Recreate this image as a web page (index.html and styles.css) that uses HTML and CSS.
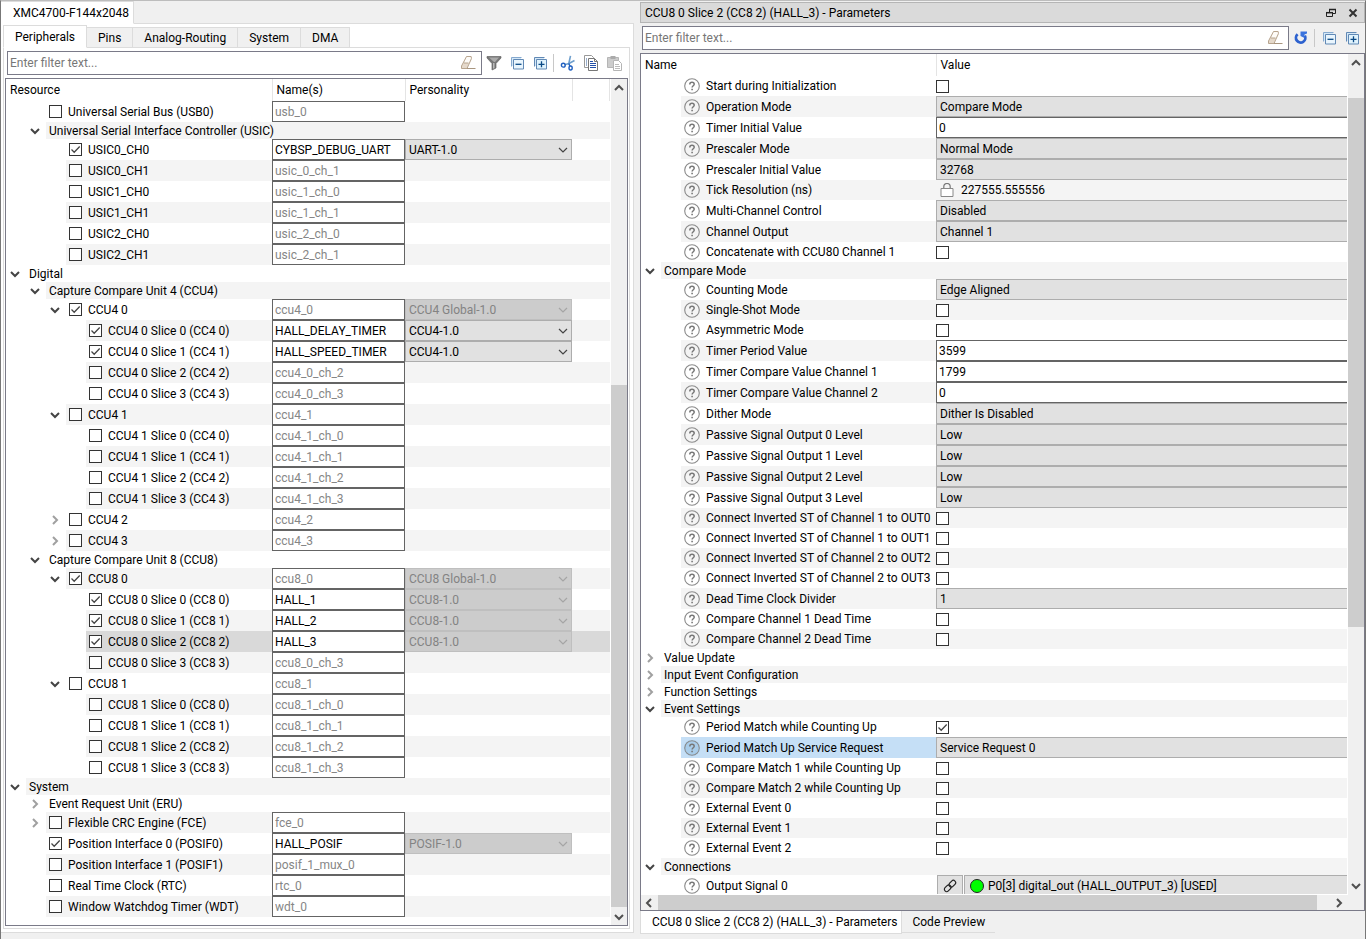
FILE: index.html
```
<!DOCTYPE html>
<html lang="en">
<head>
<meta charset="utf-8">
<title>Device Configurator</title>
<link rel="stylesheet" href="styles.css">
</head>
<body>
<svg class="sprite" aria-hidden="true">
  <symbol id="i-down" viewBox="0 0 10 10"><path d="M1 3l4 4 4-4" fill="none" stroke="#444" stroke-width="2"/></symbol>
  <symbol id="i-right" viewBox="0 0 10 10"><path d="M3 1l4 4-4 4" fill="none" stroke="#a0a0a0" stroke-width="2"/></symbol>
  <symbol id="i-arrow" viewBox="0 0 10 10"><path d="M1 7l4-4 4 4" fill="none" stroke="#505050" stroke-width="2"/></symbol>
  <symbol id="i-combo" viewBox="0 0 10 10"><path d="M1 3l4 4 4-4" fill="none" stroke="currentColor" stroke-width="1.2"/></symbol>
  <symbol id="i-help" viewBox="0 0 16 16"><circle cx="8" cy="8" r="7.3" fill="none" stroke="#8a8a8a" stroke-width="1.1"/><path d="M5.8 6.4c0-1.4 1-2.1 2.2-2.1s2.2.8 2.2 1.9c0 1.4-2.1 1.7-2.1 3.3" fill="none" stroke="#777" stroke-width="1.5"/><path d="M7.3 10.7h1.6v1.6H7.3z" fill="#777"/></symbol>
  <symbol id="i-eraser" viewBox="0 0 16 16"><path d="M6.5 1.5h5L7 13.5H1.5V11z" fill="#e5d9cb"/><path d="M6.5 1.5h5L9 8H4z" fill="#fdfbf8"/><path d="M1.5 13.5V11l5-9.500h4.600l.4 2-4.500 10zM4 8h4.500" fill="none" stroke="#b7a48e"/><path d="M7 13.500h8.500" stroke="#a8957f"/></symbol>
  <symbol id="i-funnel" viewBox="0 0 16 16"><path d="M1 1.500h14v1.500L10 8.500V13l-4 2V8.500L1 3z" fill="#777"/><path d="M3 2.500h10L9 7H8z" fill="#aaa"/><path d="M7 8h1.500v5L7 14z" fill="#bbb"/><path d="M1 1.500h14v1.500L10 8.500V13l-4 2V8.500L1 3z" fill="none" stroke="#666" stroke-width=".7"/></symbol>
  <symbol id="i-collapse" viewBox="0 0 16 16"><path d="M2.500 11.500v-9h10" fill="none" stroke="#85a9cf"/><path d="M3 3h9v8H3z" fill="#d5e8f7"/><path d="M4.500 4.500h10v9.500h-10z" fill="#e9f5fd" stroke="#6189b5"/><path d="M6.500 9.300h6" stroke="#0b4a86" stroke-width="1.300"/></symbol>
  <symbol id="i-expand" viewBox="0 0 16 16"><path d="M2.500 11.500v-9h10" fill="none" stroke="#6189b5"/><path d="M3 3h9v8H3z" fill="#d5e8f7"/><path d="M4.500 4.500h10v9.500h-10z" fill="#e0f3fd" stroke="#6189b5"/><path d="M6.500 9.300h6M9.500 6.300v6" stroke="#0b4a86" stroke-width="1.300"/></symbol>
  <symbol id="i-cut" viewBox="0 0 16 16"><path d="M10.500.8L8.800 8.500M14.500 5.500L9 8.500l-4.500 1.200" fill="none" stroke="#6f9fcd" stroke-width="1.600"/><circle cx="3.300" cy="10.200" r="1.900" fill="none" stroke="#1f5fc0" stroke-width="1.400"/><ellipse cx="10.600" cy="13" rx="1.600" ry="2" fill="none" stroke="#1f5fc0" stroke-width="1.400"/><path d="M8.700 8.500l1.300 2.800" stroke="#1f5fc0" stroke-width="1.500"/></symbol>
  <symbol id="i-copy" viewBox="0 0 16 16"><path d="M1.500.500h7l2 2v10h-9z" fill="#fff" stroke="#999"/><path d="M3 4h1M3 6h1M3 8h1M3 10h1" stroke="#35609c"/><path d="M5.500 3.500h6l3 3v9h-9z" fill="#fff" stroke="#777"/><path d="M11.500 3.500v3h3" fill="none" stroke="#777"/><path d="M7 8.500h6M7 10.500h6M7 12.500h6M7 6.500h3" stroke="#2450a8"/></symbol>
  <symbol id="i-paste" viewBox="0 0 16 16"><path d="M1.500 2.500h11v10h-11z" fill="#ccc" stroke="#b5b5b5"/><path d="M4.500 1h5v3h-5z" fill="#aaa"/><path d="M7.500 5.500h5l3 3v7h-8z" fill="#fff" stroke="#b5b5b5"/><path d="M9 9.500h4M9 11.500h5M9 13.500h5" stroke="#bbb"/></symbol>
  <symbol id="i-refresh" viewBox="0 0 16 16"><path d="M4.600 4.300A4.700 4.700 0 1 0 11.800 5.600" fill="none" stroke="#2d62cf" stroke-width="2.800"/><path d="M7.500 1.500h6.500v2l-2.500 1V8L7.500 6z" fill="#3a73dd"/></symbol>
  <symbol id="i-restore" viewBox="0 0 10 10"><path d="M3.500 4V1.500h6v4H7" fill="none" stroke="#222"/><path d="M3 1.500h7" stroke="#222" stroke-width="1.500"/><path d="M.500 4.500h6v4h-6z" fill="#dadada" stroke="#222"/><path d="M0 4.700h7" stroke="#222" stroke-width="1.500"/></symbol>
  <symbol id="i-close" viewBox="0 0 10 10"><path d="M1.500 1.500l7 7M8.500 1.500l-7 7" stroke="#333" stroke-width="2"/></symbol>
  <symbol id="i-lock" viewBox="0 0 14 14"><path d="M3.800 5.500V3.700a3.200 3.200 0 0 1 6.400 0v1.800" fill="none" stroke="#777" stroke-width="1.200"/><path d="M1 5.500h12v8H1z" fill="#fff" stroke="#888"/></symbol>
  <symbol id="i-link" viewBox="0 0 14 14"><g transform="rotate(-45 7 7)" fill="none" stroke="#222" stroke-width="1.200"><rect x="0" y="4.700" width="7.500" height="4.600" rx="2.300"/><rect x="6.500" y="4.700" width="7.500" height="4.600" rx="2.300"/></g></symbol>
</svg>

<main class="window">
  <section class="pane device">
    <nav class="tabs doc-tabs"><button class="tab active">XMC4700-F144x2048</button></nav>
    <div class="device-body">
      <nav class="tabs sub-tabs">
        <button class="tab active">Peripherals</button><button class="tab">Pins</button><button class="tab">Analog-Routing</button><button class="tab">System</button><button class="tab">DMA</button>
      </nav>
      <div class="device-page">
        <div class="toolbar">
          <div class="filter"><input type="text" placeholder="Enter filter text..." aria-label="Filter resources"><button class="tool" aria-label="Clear filter"><svg class="icon"><use href="#i-eraser"/></svg></button></div>
          <button class="tool" aria-label="Filter"><svg class="icon"><use href="#i-funnel"/></svg></button>
          <button class="tool" aria-label="Collapse all"><svg class="icon"><use href="#i-collapse"/></svg></button>
          <button class="tool" aria-label="Expand all"><svg class="icon"><use href="#i-expand"/></svg></button>
          <span class="divider"></span>
          <button class="tool" aria-label="Cut"><svg class="icon"><use href="#i-cut"/></svg></button>
          <button class="tool" aria-label="Copy"><svg class="icon"><use href="#i-copy"/></svg></button>
          <button class="tool" aria-label="Paste" disabled><svg class="icon"><use href="#i-paste"/></svg></button>
        </div>
        <div class="frame">
          <div class="viewport">
            <table class="grid">
              <colgroup><col class="c-resource"><col class="c-names"><col class="c-personality"><col></colgroup>
              <thead><tr><th>Resource</th><th>Name(s)</th><th>Personality</th><th></th></tr></thead>
              <tbody id="resources"></tbody>
            </table>
          </div>
          <div class="vbar"><svg class="arrow"><use href="#i-arrow"/></svg><div class="track low"><div class="thumb"></div></div><svg class="arrow flip"><use href="#i-arrow"/></svg></div>
        </div>
      </div>
    </div>
  </section>

  <section class="pane params">
    <header class="title"><h1>CCU8 0 Slice 2 (CC8 2) (HALL_3) - Parameters</h1>
      <button class="tool" aria-label="Restore"><svg class="small"><use href="#i-restore"/></svg></button>
      <button class="tool" aria-label="Close"><svg class="small"><use href="#i-close"/></svg></button>
    </header>
    <div class="toolbar">
      <div class="filter"><input type="text" placeholder="Enter filter text..." aria-label="Filter parameters"><button class="tool" aria-label="Clear filter"><svg class="icon"><use href="#i-eraser"/></svg></button></div>
      <button class="tool" aria-label="Reset"><svg class="icon"><use href="#i-refresh"/></svg></button>
      <span class="divider"></span>
      <button class="tool" aria-label="Collapse all"><svg class="icon"><use href="#i-collapse"/></svg></button>
      <button class="tool" aria-label="Expand all"><svg class="icon"><use href="#i-expand"/></svg></button>
    </div>
    <div class="frame">
      <div class="viewport">
        <table class="grid">
          <colgroup><col class="c-param"><col></colgroup>
          <thead><tr><th>Name</th><th>Value</th></tr></thead>
          <tbody id="parameters"></tbody>
        </table>
      </div>
      <div class="vbar"><svg class="arrow"><use href="#i-arrow"/></svg><div class="track high"><div class="thumb"></div></div><svg class="arrow flip"><use href="#i-arrow"/></svg></div>
      <div class="hbar"><svg class="arrow left"><use href="#i-arrow"/></svg><div class="track"><div class="thumb"></div></div><svg class="arrow right"><use href="#i-arrow"/></svg></div>
    </div>
    <nav class="tabs bottom-tabs"><button class="tab active">CCU8 0 Slice 2 (CC8 2) (HALL_3) - Parameters</button><button class="tab">Code Preview</button></nav>
  </section>
</main>
<script src="app.js"></script>
</body>
</html>
```
FILE: styles.css
```
* { box-sizing: border-box; }
body { margin: 0; background: #f0f0f0; color: #000; font: 12px/16px Roboto, "Open Sans", sans-serif; }
button, input, select { font: inherit; color: inherit; margin: 0; padding: 0; border: 0; border-radius: 0; background: none; }
svg { display: block; flex: none; }
.sprite { display: none; }
.icon { width: 16px; height: 16px; }
.small, .arrow { width: 10px; height: 10px; }

.window { display: flex; gap: 6px; height: 100vh; min-height: 400px; border: 1px solid #bdbdbd; border-left-color: #777; border-right-color: #777; border-bottom: 0; }
.pane { display: flex; flex-direction: column; min-width: 0; }
.device { flex: 633 1 0; padding-bottom: 6px; }
.params { flex: 725 1 0; padding: 1px 0 5px; }

.tabs { display: flex; flex: none; }
.tab { padding: 0 11px; border: 1px solid #dcdcdc; border-left: 0; background: #f0f0f0; white-space: nowrap; }
.tab.active { background: #fff; border-bottom-color: #fff; }

.doc-tabs { height: 23px; }
.doc-tabs .tab { padding: 0 4px 0 12px; }
.doc-tabs::after, .sub-tabs::after { content: ""; flex: 1; border-bottom: 1px solid #dcdcdc; }
.device-body { display: flex; flex-direction: column; flex: 1; min-height: 0; padding: 1px 3px 3px 2px; background: #fff; border: 1px solid #dcdcdc; border-width: 0 1px 1px 0; }
.sub-tabs { height: 23px; align-items: flex-end; }
.sub-tabs .tab { height: 21px; }
.sub-tabs .tab.active { height: 23px; border-left: 1px solid #dcdcdc; }
.device-page { display: flex; flex-direction: column; flex: 1; min-height: 0; padding: 0 1px 2px; border: 1px solid #dcdcdc; border-top: 0; }

.toolbar { display: flex; flex: none; align-items: center; height: 30px; padding: 0 2px; }
.device .toolbar { padding-right: 3px; }
.filter { display: flex; flex: 1; align-items: center; height: 24px; border: 1px solid #7a7a88; background: #fff; }
.filter input { flex: 1; min-width: 0; padding: 0 2px; outline: 0; }
.filter input::placeholder { color: #777; opacity: 1; }
.filter .tool { width: 26px; }
.tool { display: flex; align-items: center; justify-content: center; width: 23px; height: 22px; }
.divider { width: 1px; height: 18px; margin: 0 2px; background: #c8c8c8; }

.frame { display: grid; flex: 1; grid-template: minmax(0, 1fr) auto / minmax(0, 1fr) 16px; min-height: 0; border: 1px solid #7a7a88; background: #f0f0f0; }
.viewport { overflow: hidden; background: #fff; border-right: 1px solid #fff; }
.grid { width: 100%; border-collapse: collapse; table-layout: fixed; }
.c-resource { width: 266px; }
.c-names { width: 133px; }
.c-personality { width: 167px; }
.c-param { width: 295px; }
th { height: 22px; padding: 0 4px; font-weight: 400; text-align: left; border-right: 1px solid #e4e4e4; }
.params th:last-child { border-right: 0; }
td { height: 21px; padding: 0; }
.group td { height: 17px; }
.check td { height: 20px; }

.name { display: flex; height: 100%; white-space: nowrap; }
.name.l1 { padding-left: 20px; }
.name.l2 { padding-left: 40px; }
.name.l3 { padding-left: 60px; }
.twisty { display: flex; align-items: center; width: 20px; padding-left: 4px; flex: none; }
.twisty svg { width: 10px; height: 10px; }
.fill { display: flex; flex: 1; align-items: center; gap: 6px; min-width: 0; height: 21px; padding-left: 3px; }
.group .fill { height: 17px; }
.check .fill { height: 20px; }
.odd .fill, .odd td.value { background: #f4f4f4; }
.selected .fill, .selected td.value { background: #d9d9d9; }
.current .fill { background: #c5dff6; }
.current .fill svg { background: #a9cdea; border-radius: 50%; }

input[type="checkbox"] { appearance: none; flex: none; display: block; width: 13px; height: 13px; border: 1px solid #333; background: #fff; }
input[type="checkbox"]:checked { background: #fff url("data:image/svg+xml,%3Csvg xmlns='http://www.w3.org/2000/svg' viewBox='0 0 11 11'%3E%3Cpath d='M1.500 5.500l2.700 2.700 5.500-5.700' fill='none' stroke='%23444' stroke-width='1.300'/%3E%3C/svg%3E"); }

.edit { display: block; width: 100%; height: 21px; padding: 0 2px; border: 1px solid #646464; background: #fff; outline: 0; }
.edit.unused { color: #868686; }
.combo { display: grid; height: 21px; align-items: center; }
.combo select, .combo svg { grid-area: 1 / 1; }
.combo select { appearance: none; width: 100%; height: 21px; padding: 0 3px; border: 1px solid #adadad; background: #e1e1e1; opacity: 1; }
.combo select:disabled { color: #838383; background: #ccc; border-color: #bfbfbf; }
.combo svg { justify-self: end; width: 10px; height: 10px; margin-right: 4px; color: #444; pointer-events: none; }
.combo select:disabled + svg { color: #a5a5a5; }
.params .edit, .params .combo select { border-right: 0; }
.readonly { display: flex; align-items: center; gap: 7px; padding-left: 4px; }
.readonly svg { width: 14px; height: 14px; }
.signal { display: flex; gap: 1px; height: 21px; padding-left: 1px; }
.signal button { display: flex; align-items: center; border: 1px solid #adadad; background: #e1e1e1; }
.signal .link { justify-content: center; width: 26px; }
.signal .link svg { width: 14px; height: 14px; }
.signal .pin { flex: 1; gap: 4px; padding-left: 5px; border-right: 0; white-space: nowrap; }
.led { width: 14px; height: 14px; border: 1px solid #222; border-radius: 50%; background: #0f0; }

.vbar { display: flex; flex-direction: column; align-items: center; padding: 4px 0 3px; }
.track { display: flex; flex: 1; }
.vbar .track { flex-direction: column; align-self: stretch; margin: 5px 0; }
.thumb { background: #cdcdcd; }
.track.low::before { content: ""; flex: 11; }
.track.low .thumb { flex: 20; }
.track.high { padding-top: 25px; }
.track.high .thumb { height: 68%; }
.flip { transform: rotate(180deg); }
.left { transform: rotate(-90deg); }
.right { transform: rotate(90deg); }
.hbar { display: flex; align-items: center; height: 16px; padding: 0 4px 0 3px; border-top: 1px solid #fff; }
.hbar .track { align-self: stretch; margin: 0 4px; }
.hbar .thumb { width: 98%; }

.title { display: flex; flex: none; align-items: center; height: 21px; padding: 0 0 0 4px; border: 1px solid #b5b5b5; background: #dadada; }
.title h1 { flex: 1; margin: 0; font: inherit; }
.title .tool { width: 22px; height: 18px; }
.bottom-tabs { align-items: flex-start; height: 23px; }
.bottom-tabs .tab { height: 22px; padding: 0 10px; border-top: 0; border-right: 0; }
.bottom-tabs .tab.active { height: 23px; padding: 0 4px 0 11px; border: 1px solid #dcdcdc; border-top: 0; }
```
FILE: app.js
```
// Resource rows: [level, arrow, label, checked, name, name in use, personality, personality enabled]
// arrow: "v" expanded, ">" collapsed, "" leaf. Group rows stop after the label.
const resources = [
  [1, "", "Universal Serial Bus (USB0)", 0, "usb_0"],
  [1, "v", "Universal Serial Interface Controller (USIC)"],
  [2, "", "USIC0_CH0", 1, "CYBSP_DEBUG_UART", 1, "UART-1.0", 1],
  [2, "", "USIC0_CH1", 0, "usic_0_ch_1"],
  [2, "", "USIC1_CH0", 0, "usic_1_ch_0"],
  [2, "", "USIC1_CH1", 0, "usic_1_ch_1"],
  [2, "", "USIC2_CH0", 0, "usic_2_ch_0"],
  [2, "", "USIC2_CH1", 0, "usic_2_ch_1"],
  [0, "v", "Digital"],
  [1, "v", "Capture Compare Unit 4 (CCU4)"],
  [2, "v", "CCU4 0", 1, "ccu4_0", 0, "CCU4 Global-1.0", 0],
  [3, "", "CCU4 0 Slice 0 (CC4 0)", 1, "HALL_DELAY_TIMER", 1, "CCU4-1.0", 1],
  [3, "", "CCU4 0 Slice 1 (CC4 1)", 1, "HALL_SPEED_TIMER", 1, "CCU4-1.0", 1],
  [3, "", "CCU4 0 Slice 2 (CC4 2)", 0, "ccu4_0_ch_2"],
  [3, "", "CCU4 0 Slice 3 (CC4 3)", 0, "ccu4_0_ch_3"],
  [2, "v", "CCU4 1", 0, "ccu4_1"],
  [3, "", "CCU4 1 Slice 0 (CC4 0)", 0, "ccu4_1_ch_0"],
  [3, "", "CCU4 1 Slice 1 (CC4 1)", 0, "ccu4_1_ch_1"],
  [3, "", "CCU4 1 Slice 2 (CC4 2)", 0, "ccu4_1_ch_2"],
  [3, "", "CCU4 1 Slice 3 (CC4 3)", 0, "ccu4_1_ch_3"],
  [2, ">", "CCU4 2", 0, "ccu4_2"],
  [2, ">", "CCU4 3", 0, "ccu4_3"],
  [1, "v", "Capture Compare Unit 8 (CCU8)"],
  [2, "v", "CCU8 0", 1, "ccu8_0", 0, "CCU8 Global-1.0", 0],
  [3, "", "CCU8 0 Slice 0 (CC8 0)", 1, "HALL_1", 1, "CCU8-1.0", 0],
  [3, "", "CCU8 0 Slice 1 (CC8 1)", 1, "HALL_2", 1, "CCU8-1.0", 0],
  [3, "", "CCU8 0 Slice 2 (CC8 2)", 1, "HALL_3", 1, "CCU8-1.0", 0],
  [3, "", "CCU8 0 Slice 3 (CC8 3)", 0, "ccu8_0_ch_3"],
  [2, "v", "CCU8 1", 0, "ccu8_1"],
  [3, "", "CCU8 1 Slice 0 (CC8 0)", 0, "ccu8_1_ch_0"],
  [3, "", "CCU8 1 Slice 1 (CC8 1)", 0, "ccu8_1_ch_1"],
  [3, "", "CCU8 1 Slice 2 (CC8 2)", 0, "ccu8_1_ch_2"],
  [3, "", "CCU8 1 Slice 3 (CC8 3)", 0, "ccu8_1_ch_3"],
  [0, "v", "System"],
  [1, ">", "Event Request Unit (ERU)"],
  [1, ">", "Flexible CRC Engine (FCE)", 0, "fce_0"],
  [1, "", "Position Interface 0 (POSIF0)", 1, "HALL_POSIF", 1, "POSIF-1.0", 0],
  [1, "", "Position Interface 1 (POSIF1)", 0, "posif_1_mux_0"],
  [1, "", "Real Time Clock (RTC)", 0, "rtc_0"],
  [1, "", "Window Watchdog Timer (WDT)", 0, "wdt_0"]
];
const selectedResource = "CCU8 0 Slice 2 (CC8 2)";

// Parameter rows: [kind, label, value]
const parameters = [
  ["check", "Start during Initialization", 0],
  ["select", "Operation Mode", "Compare Mode"],
  ["edit", "Timer Initial Value", "0"],
  ["select", "Prescaler Mode", "Normal Mode"],
  ["select", "Prescaler Initial Value", "32768"],
  ["readonly", "Tick Resolution (ns)", "227555.555556"],
  ["select", "Multi-Channel Control", "Disabled"],
  ["select", "Channel Output", "Channel 1"],
  ["check", "Concatenate with CCU80 Channel 1", 0],
  ["open", "Compare Mode"],
  ["select", "Counting Mode", "Edge Aligned"],
  ["check", "Single-Shot Mode", 0],
  ["check", "Asymmetric Mode", 0],
  ["edit", "Timer Period Value", "3599"],
  ["edit", "Timer Compare Value Channel 1", "1799"],
  ["edit", "Timer Compare Value Channel 2", "0"],
  ["select", "Dither Mode", "Dither Is Disabled"],
  ["select", "Passive Signal Output 0 Level", "Low"],
  ["select", "Passive Signal Output 1 Level", "Low"],
  ["select", "Passive Signal Output 2 Level", "Low"],
  ["select", "Passive Signal Output 3 Level", "Low"],
  ["check", "Connect Inverted ST of Channel 1 to OUT0", 0],
  ["check", "Connect Inverted ST of Channel 1 to OUT1", 0],
  ["check", "Connect Inverted ST of Channel 2 to OUT2", 0],
  ["check", "Connect Inverted ST of Channel 2 to OUT3", 0],
  ["select", "Dead Time Clock Divider", "1"],
  ["check", "Compare Channel 1 Dead Time", 0],
  ["check", "Compare Channel 2 Dead Time", 0],
  ["closed", "Value Update"],
  ["closed", "Input Event Configuration"],
  ["closed", "Function Settings"],
  ["open", "Event Settings"],
  ["check", "Period Match while Counting Up", 1],
  ["select", "Period Match Up Service Request", "Service Request 0"],
  ["check", "Compare Match 1 while Counting Up", 0],
  ["check", "Compare Match 2 while Counting Up", 0],
  ["check", "External Event 0", 0],
  ["check", "External Event 1", 0],
  ["check", "External Event 2", 0],
  ["open", "Connections"],
  ["signal", "Output Signal 0", "P0[3] digital_out (HALL_OUTPUT_3) [USED]"]
];
const currentParameter = "Period Match Up Service Request";

const icon = id => `<svg aria-hidden="true"><use href="#${id}"/></svg>`;
const twisty = arrow => `<span class="twisty">${arrow ? icon(arrow === "v" ? "i-down" : "i-right") : ""}</span>`;

document.getElementById("resources").innerHTML = resources.map((row, i) => {
  const [level, arrow, label, checked, name, inUse, personality, enabled] = row;
  const stripe = i % 2 ? "odd" : "";
  if (name === undefined) {
    return `<tr class="${stripe} group"><td colspan="4"><div class="name l${level}">${twisty(arrow)}<span class="fill">${label}</span></div></td></tr>`;
  }
  const selected = label === selectedResource ? "selected" : "";
  const combo = personality
    ? `<div class="combo"><select aria-label="${label} personality" ${enabled ? "" : "disabled"}><option>${personality}</option></select>${icon("i-combo")}</div>`
    : "";
  return `<tr class="${stripe} ${selected}">` +
    `<td><div class="name l${level}">${twisty(arrow)}<label class="fill"><input type="checkbox" ${checked ? "checked" : ""}>${label}</label></div></td>` +
    `<td class="value"><input class="edit ${inUse ? "" : "unused"}" type="text" value="${name}" aria-label="${label} name"></td>` +
    `<td class="value">${combo}</td><td class="value"></td></tr>`;
}).join("");

const editors = {
  check: (id, v) => `<input type="checkbox" id="${id}" ${v ? "checked" : ""}>`,
  select: (id, v) => `<div class="combo"><select id="${id}"><option>${v}</option></select></div>`,
  edit: (id, v) => `<input class="edit" type="text" id="${id}" value="${v}">`,
  readonly: (id, v) => `<output class="readonly" id="${id}">${icon("i-lock")}${v}</output>`,
  signal: (id, v) => `<div class="signal"><button class="link" aria-label="Go to signal">${icon("i-link")}</button><button class="pin" id="${id}"><span class="led"></span>${v}</button></div>`
};

document.getElementById("parameters").innerHTML = parameters.map(([kind, label, value], i) => {
  const stripe = i % 2 ? "odd" : "";
  if (kind === "open" || kind === "closed") {
    return `<tr class="${stripe} group"><td colspan="2"><div class="name">${twisty(kind === "open" ? "v" : ">")}<span class="fill">${label}</span></div></td></tr>`;
  }
  const height = kind === "check" || kind === "readonly" ? "check" : "";
  const current = label === currentParameter ? "current" : "";
  const id = "param-" + i;
  return `<tr class="${stripe} ${height} ${current}">` +
    `<td><div class="name l1">${twisty("")}<label class="fill" for="${id}"><svg class="icon" aria-hidden="true"><use href="#i-help"/></svg>${label}</label></div></td>` +
    `<td class="value">${editors[kind](id, value)}</td></tr>`;
}).join("");
```
